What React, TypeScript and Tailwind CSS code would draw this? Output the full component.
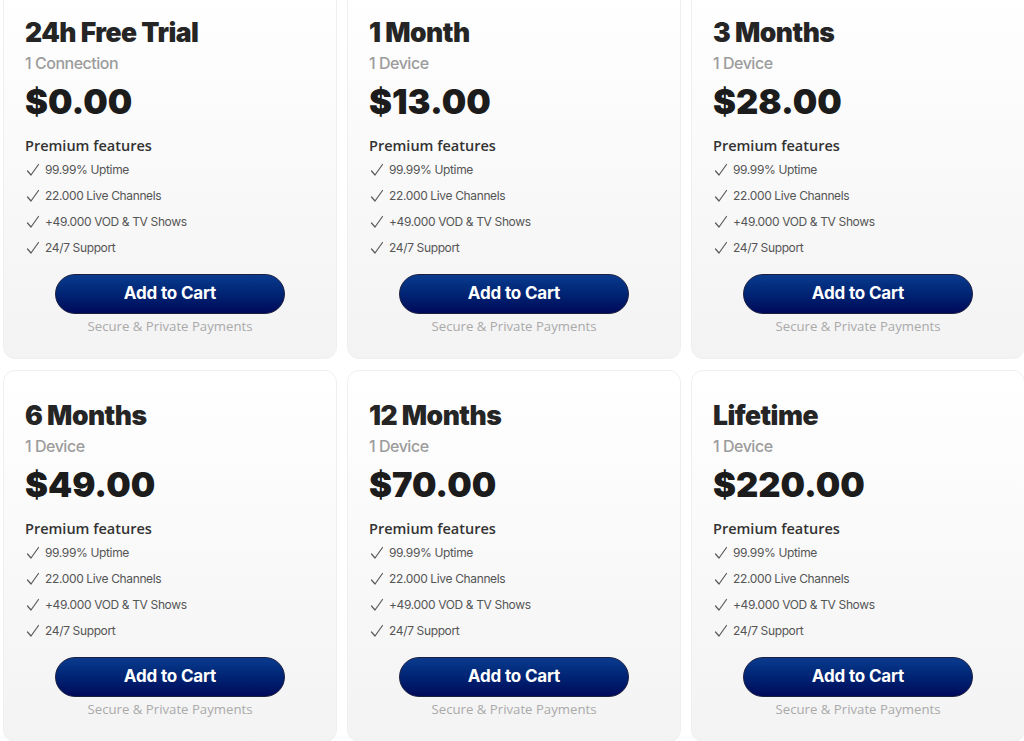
const plans = [
  { name: "24h Free Trial", sub: "1 Connection", price: "$0.00" },
  { name: "1 Month", sub: "1 Device", price: "$13.00" },
  { name: "3 Months", sub: "1 Device", price: "$28.00" },
  { name: "6 Months", sub: "1 Device", price: "$49.00" },
  { name: "12 Months", sub: "1 Device", price: "$70.00" },
  { name: "Lifetime", sub: "1 Device", price: "$220.00" },
];

const features = [
  "99.99% Uptime",
  "22.000 Live Channels",
  "+49.000 VOD & TV Shows",
  "24/7 Support",
];

function Check() {
  return (
    <svg width="14" height="14" viewBox="0 0 14 14" className="shrink-0">
      <path
        d="M1.5 8 L5 12 L12.5 1.5"
        fill="none"
        stroke="#5a5a5a"
        strokeWidth="1.2"
        strokeLinecap="round"
        strokeLinejoin="round"
      />
    </svg>
  );
}

function PlanCard({ name, sub, price }: { name: string; sub: string; price: string }) {
  return (
    <div className="flex h-[372px] flex-col rounded-xl border border-[#efefef] bg-gradient-to-b from-white to-[#f3f3f3] px-[21px] pt-[28px] pb-[23px]">
      <h2 className="font-['Inter',sans-serif] text-[26.5px] leading-[32px] font-black tracking-[-0.02em] text-[#252525]">
        {name}
      </h2>
      <div className="mt-[5px] font-['Inter',sans-serif] text-[16px] leading-[20px] font-medium tracking-[-0.03em] text-[#9c9c9c]">
        {sub}
      </div>
      <div className="mt-[9px] font-['Inter',sans-serif] text-[34.5px] leading-[40px] font-black text-[#1c1c1c]">
        {price}
      </div>
      <div className="mt-[14px] font-['Open_Sans',sans-serif] text-[14.5px] leading-[20px] font-semibold text-[#333]">
        Premium features
      </div>
      <ul className="mt-px flex flex-col">
        {features.map((f) => (
          <li key={f} className="flex h-[26px] items-center gap-[5px] pl-[1px]">
            <Check />
            <span className="font-['Inter',sans-serif] text-[12px] tracking-[-0.03em] text-[#555]">
              {f}
            </span>
          </li>
        ))}
      </ul>
      <div className="mt-[14px] flex flex-col items-center">
        <button className="-mt-px h-[40px] w-[230px] rounded-full border border-[#1b1f3f] bg-gradient-to-b from-[#0b3b8e] to-[#00095a] font-['Inter',sans-serif] text-[17px] font-bold tracking-[-0.01em] text-white">
          Add to Cart
        </button>
        <div className="mt-[2px] font-['Open_Sans',sans-serif] text-[13.2px] leading-[20px] text-[#aaa]">
          Secure &amp; Private Payments
        </div>
      </div>
    </div>
  );
}

export default function App() {
  return (
    <div className="h-[741px] w-[1024px] overflow-hidden bg-white">
      <div className="-mt-[13px] grid w-[1025px] grid-cols-3 gap-x-[10px] gap-y-[11px] pl-[3px]">
        {plans.map((p) => (
          <PlanCard key={p.name} {...p} />
        ))}
      </div>
    </div>
  );
}
